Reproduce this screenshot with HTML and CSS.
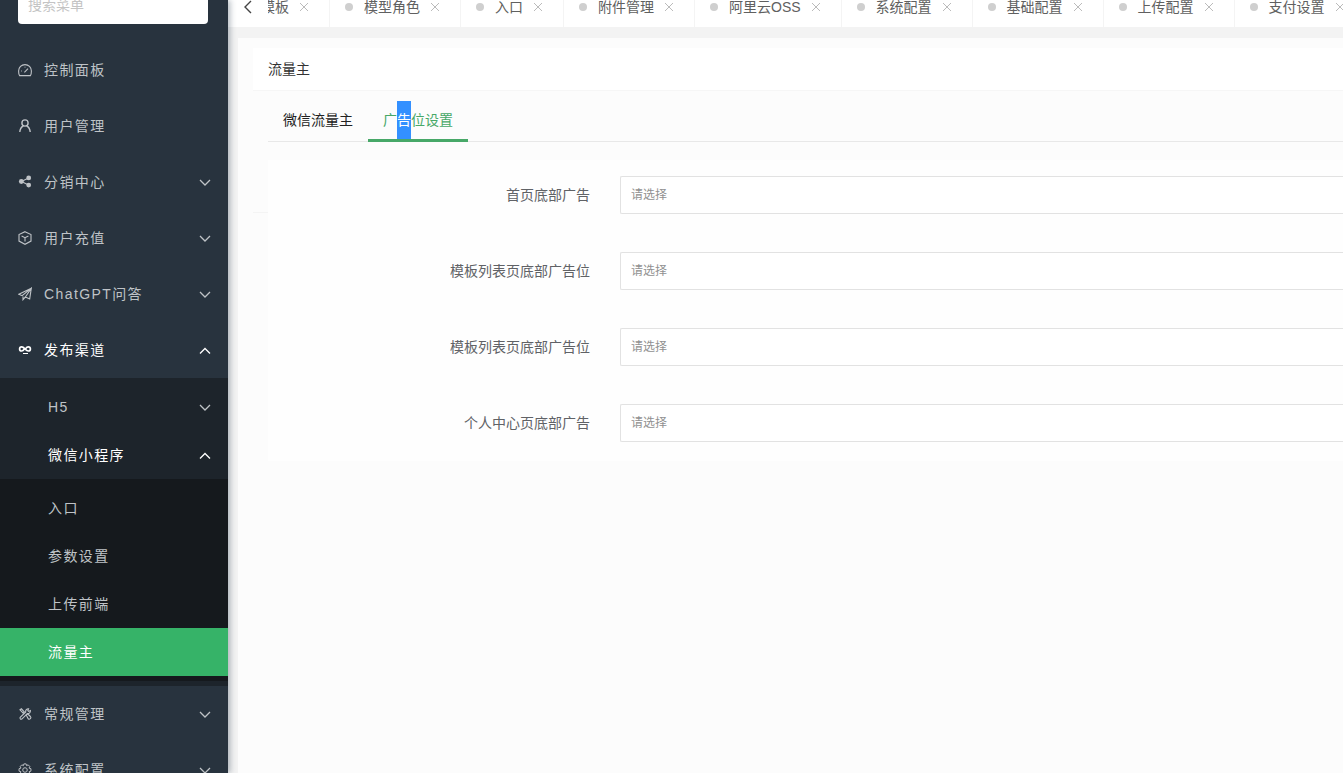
FILE: index.html
```html
<!DOCTYPE html>
<html lang="zh-CN">
<head>
<meta charset="utf-8">
<title>流量主</title>
<link rel="stylesheet" href="styles.css">
</head>
<body>
<svg class="sprite" aria-hidden="true">
  <symbol id="down" viewBox="0 0 12 12"><path d="M1 4l5 5 5-5"/></symbol>
  <symbol id="up" viewBox="0 0 12 12"><path d="M1 9.500l5-5 5 5"/></symbol>
  <symbol id="close" viewBox="0 0 10 10"><path d="M1 1l8 8M9 1L1 9"/></symbol>
</svg>
<div class="app">
  <aside class="sidebar">
    <input class="search" type="text" placeholder="搜索菜单" aria-label="搜索菜单">
    <nav class="menu">
      <a class="item" href="#">
        <svg class="icon" viewBox="0 0 14 14"><path d="M1.600 12.600C.8 11.500.6 10.200.6 8a6.400 6.400 0 0 1 12.800 0c0 2.200-.2 3.500-1 4.600z"/><path d="M6.400 9.300L10 5.700"/><path d="M3.200 8h.8M7 3.800v.8"/></svg>
        <span class="text">控制面板</span>
      </a>
      <a class="item" href="#">
        <svg class="icon heavy" viewBox="0 0 14 14"><circle cx="7" cy="4" r="3.100"/><path d="M5.400 6.800C3 8 2 10.200 1.800 13M8.600 6.800C11 8 12 10.200 12.200 13"/></svg>
        <span class="text">用户管理</span>
      </a>
      <a class="item" href="#">
        <svg class="icon solid" viewBox="0 0 14 14"><path d="M10.500 3L3.500 6.500l7 3.500"/><circle cx="10.700" cy="2.900" r="2.400"/><circle cx="3.300" cy="6.500" r="2.400"/><circle cx="10.700" cy="10.100" r="2.400"/></svg>
        <span class="text">分销中心</span>
        <svg class="arrow"><use href="#down"/></svg>
      </a>
      <a class="item" href="#">
        <svg class="icon" viewBox="0 0 14 14"><path d="M7 .7l6 2.800v6.600l-6 3.200-6-3.200V3.500zM3.600 4.900L7 6.700l3.400-1.800M7 6.700v3.800"/></svg>
        <span class="text">用户充值</span>
        <svg class="arrow"><use href="#down"/></svg>
      </a>
      <a class="item" href="#">
        <svg class="icon" viewBox="0 0 14 14"><path d="M13.300 1.200L.8 7.200l3.300 1.500 9.200-7.500-1.600 10.700-4.300-2zM5 9.500v3.200l2.400-2.800"/></svg>
        <span class="text">ChatGPT问答</span>
        <svg class="arrow"><use href="#down"/></svg>
      </a>
      <a class="item on" href="#">
        <svg class="icon bold" viewBox="0 0 14 14"><path d="M6.300 6C5.500 7.300 4.800 8 3.700 8a2.100 2.100 0 1 1 0-4.200C6.300 3.800 7.700 8 10.300 8a2.100 2.100 0 1 0 0-4.200C9.200 3.800 8.400 4.500 7.700 5.600"/><path class="thin" d="M5 10.500h5"/></svg>
        <span class="text">发布渠道</span>
        <svg class="arrow"><use href="#up"/></svg>
      </a>
      <div class="submenu">
        <a class="subitem" href="#"><span class="text">H5</span><svg class="arrow"><use href="#down"/></svg></a>
        <a class="subitem on" href="#"><span class="text">微信小程序</span><svg class="arrow"><use href="#up"/></svg></a>
        <div class="leafmenu">
          <a class="subitem" href="#">入口</a>
          <a class="subitem" href="#">参数设置</a>
          <a class="subitem" href="#">上传前端</a>
          <a class="subitem current" href="#">流量主</a>
        </div>
      </div>
      <a class="item" href="#">
        <svg class="icon" viewBox="0 0 14 14"><path d="M2 2.800l1.400-1 3 3.200-1.200 1.200zM8.200 8l1.400-1.200 2.800 2.700a1.600 1.600 0 0 1-2.200 2.300z"/><path d="M12.400 3.600l-1.800.8-.8-.8.800-1.900A2.700 2.700 0 0 0 7.700 5L2.200 10.400a1.200 1.200 0 0 0 1.600 1.700L9.400 6.600a2.700 2.700 0 0 0 3-3z"/></svg>
        <span class="text">常规管理</span>
        <svg class="arrow"><use href="#down"/></svg>
      </a>
      <a class="item" href="#">
        <svg class="icon" viewBox="0 0 16 16"><path d="M6.700 1h2.600l.5 2 1.800-.9 1.900 1.900-.9 1.800 2.200.7v2.800l-2.200.7.900 1.900-1.900 1.900-1.800-.9-.5 2.100H6.700l-.5-2.100-1.800.9-1.900-1.900.9-1.900-2.200-.7V6.500l2.200-.7L2.500 4l1.900-1.900 1.800.9z"/><circle cx="8" cy="8" r="2.600"/></svg>
        <span class="text">系统配置</span>
        <svg class="arrow"><use href="#down"/></svg>
      </a>
    </nav>
  </aside>
  <div class="main">
    <header class="tabbar">
      <button class="back" type="button" aria-label="向左"><svg viewBox="0 0 14 14"><path d="M10 1L4 7l6 6"/></svg></button>
      <div class="strip">
        <div class="tabs">
          <div class="tab"><i class="dot"></i><span>模板</span><svg class="x"><use href="#close"/></svg></div>
          <div class="tab"><i class="dot"></i><span>模型角色</span><svg class="x"><use href="#close"/></svg></div>
          <div class="tab"><i class="dot"></i><span>入口</span><svg class="x"><use href="#close"/></svg></div>
          <div class="tab"><i class="dot"></i><span>附件管理</span><svg class="x"><use href="#close"/></svg></div>
          <div class="tab"><i class="dot"></i><span>阿里云OSS</span><svg class="x"><use href="#close"/></svg></div>
          <div class="tab"><i class="dot"></i><span>系统配置</span><svg class="x"><use href="#close"/></svg></div>
          <div class="tab"><i class="dot"></i><span>基础配置</span><svg class="x"><use href="#close"/></svg></div>
          <div class="tab"><i class="dot"></i><span>上传配置</span><svg class="x"><use href="#close"/></svg></div>
          <div class="tab"><i class="dot"></i><span>支付设置</span><svg class="x"><use href="#close"/></svg></div>
        </div>
      </div>
    </header>
    <main class="page">
      <section class="card">
        <h1 class="title">流量主</h1>
        <div class="body">
          <div class="switch" role="tablist">
            <button type="button" role="tab">微信流量主</button>
            <button type="button" role="tab" class="chosen" aria-selected="true">广<span class="mark">告</span>位设置</button>
          </div>
          <form class="form">
            <div class="row"><label for="a1">首页底部广告</label><select id="a1"><option>请选择</option></select></div>
            <div class="row"><label for="a2">模板列表页底部广告位</label><select id="a2"><option>请选择</option></select></div>
            <div class="row"><label for="a3">模板列表页底部广告位</label><select id="a3"><option>请选择</option></select></div>
            <div class="row"><label for="a4">个人中心页底部广告</label><select id="a4"><option>请选择</option></select></div>
          </form>
        </div>
      </section>
    </main>
  </div>
</div>
</body>
</html>
```
FILE: styles.css
```css
* { box-sizing: border-box; }
body {
  margin: 0;
  overflow: hidden;
  font: 14px/20px "Liberation Sans", "Noto Sans CJK SC", sans-serif;
  color: #333;
}
button, input, select { font-family: inherit; }
a { color: inherit; text-decoration: none; }
svg { fill: none; stroke: currentColor; flex: none; }
.sprite { display: none; }
.app { display: flex; height: 100vh; overflow: hidden; }

.sidebar {
  flex: none;
  width: 228px;
  background: #28333e;
  color: #bfc3c7;
  box-shadow: 2px 0 6px rgba(29, 50, 70, .35);
  z-index: 1;
}
.search {
  display: block;
  width: 190px;
  height: 38px;
  margin: -14px 18px 18px;
  padding: 0 10px;
  border: 0;
  border-radius: 4px;
  background: #fff;
  font-size: 14px;
}
.search::placeholder { color: #c4c4c4; }
.menu { letter-spacing: .1em; }
.item, .subitem { display: flex; align-items: center; padding: 0 17px; }
.item { height: 56px; padding-left: 18px; }
.subitem { height: 48px; padding-left: 48px; }
.icon { width: 14px; height: 14px; margin-right: 12px; stroke-width: 1.1; }
.icon.heavy { stroke-width: 1.4; }
.icon.solid circle { fill: currentColor; stroke: none; }
.icon.bold { stroke-width: 1.7; }
.icon .thin { stroke-width: 1; }
.text { flex: 1; }
.arrow { width: 12px; height: 12px; stroke-width: 1.3; }
.on, .current { color: #fff; }
.submenu { padding: 5px 0; background: #1d242b; }
.leafmenu { padding: 5px 0; background: #15191d; }
.current { background: #36b368; }

.main { flex: 1; min-width: 0; display: flex; flex-direction: column; background: #f3f3f3; }
.tabbar {
  flex: none;
  display: flex;
  height: 40px;
  margin-top: -13px;
  background: #fff;
  color: #606060;
}
.back {
  width: 40px;
  padding: 0;
  border: 0;
  background: none;
  color: #444;
}
.back svg { width: 14px; height: 14px; display: block; margin: 0 auto; stroke-width: 1.4; }
.strip { flex: 1; min-width: 0; overflow: hidden; }
.tabs { display: flex; height: 100%; margin-left: -41px; }
.tab {
  flex: none;
  display: flex;
  align-items: center;
  padding: 0 20px 0 15px;
  border-right: 1px solid #f4f4f4;
  white-space: nowrap;
}
.dot { width: 8px; height: 8px; margin-right: 11px; border-radius: 50%; background: #cfcfcf; }
.x { width: 10px; height: 10px; margin-left: 10px; color: #bbb; }

.page {
  flex: 1;
  margin: 11px 0 0 10px;
  padding: 10px 0 0 15px;
  background: #fcfcfc;
}
.title {
  margin: 0;
  padding: 11px 15px;
  border-bottom: 1px solid #f6f6f6;
  background: #fff;
  font-size: 14px;
  line-height: 20px;
  font-weight: 400;
}
/* The form is taller than the panel and runs over its lower edge. */
.body {
  height: 122px;
  padding: 10px 0 0 15px;
  border-bottom: 1px solid #f4f4f4;
}
.switch { display: flex; height: 41px; border-bottom: 1px solid #e8e8e8; }
.switch button {
  height: 41px;
  padding: 0 15px;
  border: 0;
  border-bottom: 3px solid transparent;
  background: none;
  font-size: 14px;
  line-height: 38px;
  color: #222;
}
.switch .chosen { border-color: #47a868; color: #47a868; }
.mark { display: inline-block; background: #3390ff; color: #fff; }
.form {
  display: grid;
  gap: 38px;
  margin-top: 18px;
  padding: 16px 0 19px;
  background: #fefefe;
}
.row { display: flex; align-items: center; }
.row label { flex: none; width: 322px; margin-right: 30px; text-align: right; color: #606266; }
.row select {
  flex: 1;
  min-width: 0;
  height: 38px;
  padding: 0 10px;
  border: 1px solid #e2e2e2;
  border-right: 0;
  border-radius: 2px 0 0 2px;
  appearance: none;
  background: #fff;
  font-size: 12px;
  color: #909090;
}
```
